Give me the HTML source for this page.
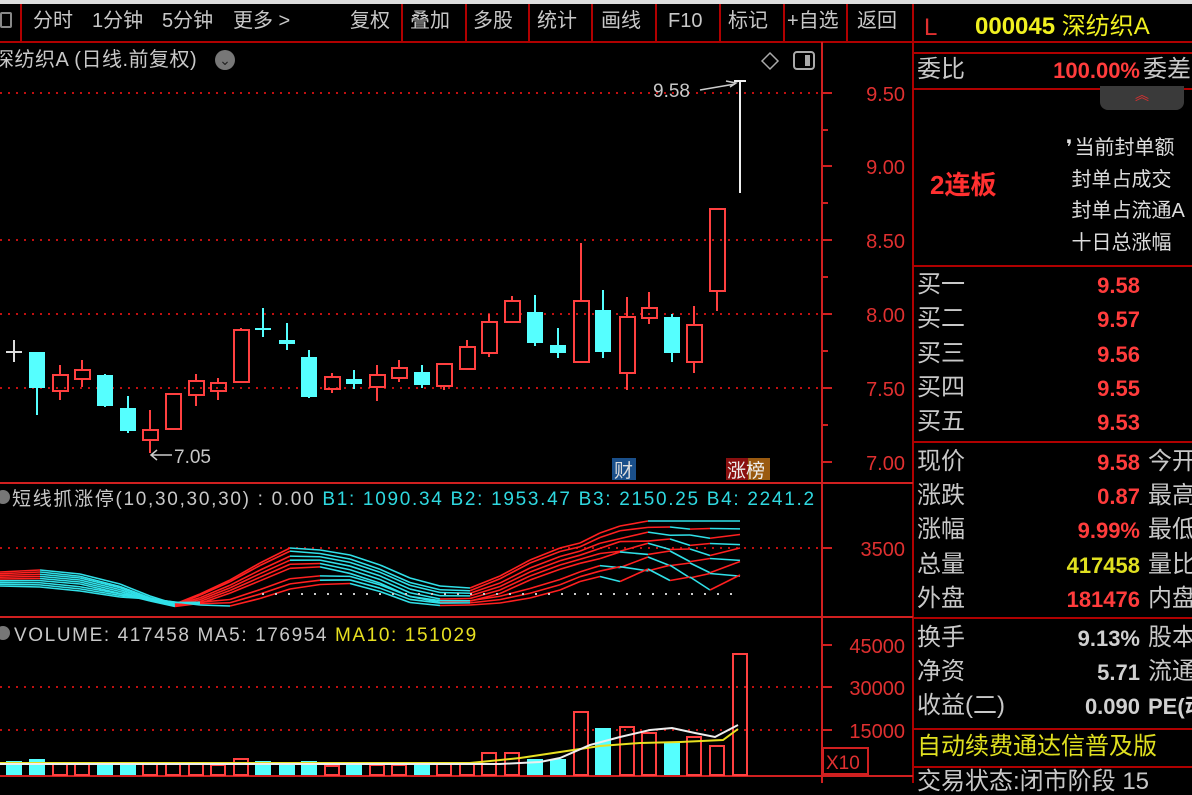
<!DOCTYPE html>
<html><head><meta charset="utf-8">
<style>
*{margin:0;padding:0;box-sizing:border-box}
body{width:1192px;height:783px;background:#000;overflow:hidden;position:relative;font-family:"Liberation Sans","Noto Sans CJK SC",sans-serif;color:#c8c8c8}
.a{position:absolute;white-space:nowrap;line-height:1}
.tb{font-size:20px;color:#c8c8c8;top:11px}
.lab{font-size:24px;color:#c8c8c8;left:917px}
.val{font-size:22px;font-weight:bold;color:#ff3c3c;text-align:right;width:120px;left:1020px}
.r2{font-size:24px;color:#c8c8c8;left:1148px}
.hl{position:absolute;background:#b00000;height:2px}
.vl{position:absolute;background:#b00000;width:2px}
</style></head><body>
<div class="a" style="left:0;top:0;width:1192px;height:4px;background:#dcdcdc"></div>
<div class="hl" style="left:0;top:41px;width:1192px"></div>
<div class="a" style="left:0;top:12px;width:12px;height:16px;border:2px solid #888;border-radius:2px"></div>
<div class="vl" style="left:20px;top:4px;height:38px"></div>
<div class="a tb" style="left:33px">分时</div>
<div class="a tb" style="left:92px">1分钟</div>
<div class="a tb" style="left:162px">5分钟</div>
<div class="a tb" style="left:233px">更多 &gt;</div>
<div class="a tb" style="left:350px">复权</div>
<div class="vl" style="left:401px;top:4px;height:38px"></div>
<div class="a tb" style="left:410px">叠加</div>
<div class="vl" style="left:465px;top:4px;height:38px"></div>
<div class="a tb" style="left:473px">多股</div>
<div class="vl" style="left:528px;top:4px;height:38px"></div>
<div class="a tb" style="left:537px">统计</div>
<div class="vl" style="left:591px;top:4px;height:38px"></div>
<div class="a tb" style="left:601px">画线</div>
<div class="vl" style="left:655px;top:4px;height:38px"></div>
<div class="a tb" style="left:668px">F10</div>
<div class="vl" style="left:719px;top:4px;height:38px"></div>
<div class="a tb" style="left:728px">标记</div>
<div class="vl" style="left:783px;top:4px;height:38px"></div>
<div class="a tb" style="left:787px">+自选</div>
<div class="vl" style="left:846px;top:4px;height:38px"></div>
<div class="a tb" style="left:857px">返回</div>
<div class="vl" style="left:912px;top:4px;height:779px"></div>

<div class="a" style="left:-6px;top:50px;font-size:20px;color:#c8c8c8;letter-spacing:0.5px">深纺织A (日线.前复权)</div>
<div class="a" style="left:215px;top:50px;width:20px;height:20px;border-radius:50%;background:#777;color:#222;font-size:14px;text-align:center;line-height:20px">⌄</div>

<svg class="a" style="left:0;top:0" width="914" height="783" id="sv">
<g stroke="#c01010" stroke-width="2" stroke-dasharray="2 6">
<line x1="0" y1="93" x2="820" y2="93"/><line x1="0" y1="240" x2="820" y2="240"/><line x1="0" y1="314" x2="820" y2="314"/><line x1="0" y1="388" x2="820" y2="388"/>
<line x1="0" y1="548" x2="820" y2="548"/><line x1="0" y1="687" x2="820" y2="687"/><line x1="0" y1="730" x2="820" y2="730"/>
</g>
<g fill="#d02020">
<rect x="821" y="42" width="2" height="741"/>
<rect x="0" y="482" width="913" height="2"/><rect x="0" y="616" width="913" height="2"/><rect x="0" y="775" width="913" height="2"/>
</g>
<g stroke="#d02020" stroke-width="2">
<line x1="822" y1="93" x2="832" y2="93"/><line x1="822" y1="166" x2="832" y2="166"/><line x1="822" y1="240" x2="832" y2="240"/><line x1="822" y1="314" x2="832" y2="314"/><line x1="822" y1="388" x2="832" y2="388"/><line x1="822" y1="462" x2="832" y2="462"/>
<line x1="822" y1="130" x2="828" y2="130"/><line x1="822" y1="203" x2="828" y2="203"/><line x1="822" y1="277" x2="828" y2="277"/><line x1="822" y1="351" x2="828" y2="351"/><line x1="822" y1="425" x2="828" y2="425"/>
<line x1="822" y1="548" x2="832" y2="548"/><line x1="822" y1="645" x2="832" y2="645"/><line x1="822" y1="687" x2="832" y2="687"/><line x1="822" y1="730" x2="832" y2="730"/>
</g>
<g font-family="Liberation Sans,sans-serif" font-size="20" fill="#e03030" text-anchor="end">
<text x="905" y="101">9.50</text><text x="905" y="174">9.00</text><text x="905" y="248">8.50</text><text x="905" y="322">8.00</text><text x="905" y="396">7.50</text><text x="905" y="470">7.00</text>
<text x="905" y="556">3500</text><text x="905" y="653">45000</text><text x="905" y="695">30000</text><text x="905" y="738">15000</text>
</g>
<rect x="823" y="748" width="45" height="26" fill="none" stroke="#d02020" stroke-width="2"/>
<text x="826" y="769" font-family="Liberation Sans,sans-serif" font-size="19" fill="#e03030">X10</text>
<path d="M770 53 L778 61 L770 69 L762 61 Z" fill="none" stroke="#aaa" stroke-width="1.5"/>
<rect x="794" y="52" width="20" height="17" rx="3" fill="none" stroke="#aaa" stroke-width="2"/><rect x="805" y="55" width="5" height="11" fill="#aaa"/>
<g id="cd"></g>
<g id="ind"></g>
<g id="vol"></g>
<g font-family="Liberation Sans,sans-serif" font-size="19" fill="#c8c8c8">
<text x="653" y="97">9.58</text><text x="174" y="463">7.05</text>
</g>
<path d="M700 90 L735 84 M726 81 L736 83 L730 87" stroke="#ccc" stroke-width="1.5" fill="none"/>
<path d="M152 455 L172 455 M157 450 L151 455 L157 460" stroke="#ccc" stroke-width="1.5" fill="none"/>
<rect x="612" y="458" width="24" height="22" fill="#1a4f8a"/><text x="614" y="477" font-size="19" fill="#ddd" font-family="Noto Sans CJK SC,sans-serif">财</text>
<rect x="726" y="458" width="22" height="22" fill="#8a0f0f"/><rect x="748" y="458" width="22" height="22" fill="#9a5a10"/>
<text x="727" y="477" font-size="19" fill="#eee" font-family="Noto Sans CJK SC,sans-serif">涨榜</text>
<circle cx="3" cy="497" r="7" fill="#777"/>
<text x="12" y="505" font-size="19" fill="#c8c8c8" letter-spacing="1.7" font-family="Liberation Sans,Noto Sans CJK SC,sans-serif">短线抓涨停(10,30,30,30) : 0.00 <tspan fill="#2fd8e0">B1: 1090.34  B2: 1953.47  B3: 2150.25  B4: 2241.2</tspan></text>
<circle cx="3" cy="633" r="7" fill="#777"/>
<text x="14" y="641" font-size="19" fill="#c8c8c8" letter-spacing="1.6" font-family="Liberation Sans,sans-serif">VOLUME: 417458  MA5: 176954  <tspan fill="#e8e020">MA10: 151029</tspan></text>
</svg>

<div class="hl" style="left:914px;top:52px;width:278px"></div>
<div class="hl" style="left:914px;top:88px;width:278px"></div>
<div class="hl" style="left:914px;top:265px;width:278px"></div>
<div class="hl" style="left:914px;top:441px;width:278px"></div>
<div class="hl" style="left:914px;top:617px;width:278px"></div>
<div class="hl" style="left:914px;top:728px;width:278px"></div>
<div class="hl" style="left:914px;top:766px;width:278px"></div>
<div class="a" style="left:924px;top:16px;font-size:24px;color:#e03030">L</div>
<div class="a" style="left:975px;top:15px;font-size:24px;color:#f0f020;font-weight:bold">000045 <span style="font-weight:normal">深纺织A</span></div>
<div class="a lab" style="top:58px">委比</div>
<div class="a val" style="top:60px;left:1020px">100.00%</div>
<div class="a r2" style="top:58px;left:1143px">委差</div>
<div class="a" style="left:1100px;top:86px;width:84px;height:24px;background:#3a3a3a;border-radius:0 0 8px 8px;color:#e03030;font-size:14px;text-align:center;line-height:18px">︽</div>
<div class="a" style="left:930px;top:172px;font-size:26px;color:#ff3030;font-weight:bold">2连板</div>
<div class="a" style="left:1066px;top:133px;font-size:20px;color:#ddd;line-height:31.5px">❜<span style="position:relative;left:2px">当前封单额</span><br>&nbsp;封单占成交<br>&nbsp;封单占流通A<br>&nbsp;十日总涨幅</div>
<div class="a lab" style="top:273px">买一</div><div class="a val" style="top:275px">9.58</div>
<div class="a lab" style="top:307px">买二</div><div class="a val" style="top:309px">9.57</div>
<div class="a lab" style="top:342px">买三</div><div class="a val" style="top:344px">9.56</div>
<div class="a lab" style="top:376px">买四</div><div class="a val" style="top:378px">9.55</div>
<div class="a lab" style="top:410px">买五</div><div class="a val" style="top:412px">9.53</div>
<div class="a lab" style="top:450px">现价</div><div class="a val" style="top:452px">9.58</div><div class="a r2" style="top:450px">今开</div>
<div class="a lab" style="top:484px">涨跌</div><div class="a val" style="top:486px">0.87</div><div class="a r2" style="top:484px">最高</div>
<div class="a lab" style="top:518px">涨幅</div><div class="a val" style="top:520px">9.99%</div><div class="a r2" style="top:518px">最低</div>
<div class="a lab" style="top:553px">总量</div><div class="a val" style="top:555px;color:#e0e020">417458</div><div class="a r2" style="top:553px">量比</div>
<div class="a lab" style="top:587px">外盘</div><div class="a val" style="top:589px">181476</div><div class="a r2" style="top:587px">内盘</div>
<div class="a lab" style="top:626px">换手</div><div class="a val" style="top:628px;color:#d0d0d0">9.13%</div><div class="a r2" style="top:626px">股本</div>
<div class="a lab" style="top:660px">净资</div><div class="a val" style="top:662px;color:#d0d0d0">5.71</div><div class="a r2" style="top:660px">流通</div>
<div class="a lab" style="top:694px">收益(二)</div><div class="a val" style="top:696px;color:#d0d0d0">0.090</div><div class="a r2" style="top:696px;font-size:22px;font-weight:bold;color:#d0d0d0">PE(动</div>
<div class="a" style="left:917px;top:735px;font-size:24px;color:#e0e020">自动续费通达信普及版</div>
<div class="a" style="left:917px;top:770px;font-size:24px;color:#c8c8c8">交易状态:闭市阶段 15</div>

<script>
var NS="http://www.w3.org/2000/svg";
function el(p,t,a){var e=document.createElementNS(NS,t);for(var k in a)e.setAttribute(k,a[k]);p.appendChild(e);return e;}
var X=[14,37,60,82,105,128,150,173,196,218,241,263,287,309,332,354,377,399,422,444,467,489,512,535,558,581,603,627,649,672,694,717,740];
var D=[[352,352,340,362,'x'],[352,388,352,415,'c'],[375,391,365,400,'r'],[370,379,360,387,'r'],[375,406,374,407,'c'],[408,431,396,433,'c'],[430,440,410,453,'r'],[394,429,394,429,'r'],[381,395,374,406,'r'],[383,391,378,400,'r'],[330,382,328,382,'r'],[329,329,308,337,'y'],[340,344,323,350,'c'],[357,397,350,398,'c'],[377,389,373,393,'r'],[379,384,370,389,'c'],[375,387,365,401,'r'],[368,378,360,382,'r'],[372,385,365,388,'c'],[364,386,363,390,'r'],[347,369,340,370,'r'],[322,353,314,357,'r'],[301,322,296,323,'r'],[312,343,295,346,'c'],[345,353,328,358,'c'],[301,362,243,362,'r'],[310,352,290,358,'c'],[317,373,297,390,'r'],[308,318,292,324,'r'],[317,353,314,362,'c'],[325,362,306,373,'r'],[209,291,209,311,'r'],[81,81,81,193,'w']];
var cd=document.getElementById('cd'),R='#ff4040',C='#55ffff';
D.forEach(function(d,i){var x=X[i];
 if(d[4]=='w'){el(cd,'line',{x1:x,y1:81,x2:x,y2:193,stroke:'#eee','stroke-width':2});el(cd,'line',{x1:x-6,y1:81,x2:x+6,y2:81,stroke:'#eee','stroke-width':2});return;}
 if(d[4]=='x'||d[4]=='y'){var col=d[4]=='x'?'#ddd':C;el(cd,'line',{x1:x,y1:d[2],x2:x,y2:d[3],stroke:col,'stroke-width':2});el(cd,'line',{x1:x-8,y1:d[0],x2:x+8,y2:d[0],stroke:col,'stroke-width':2});return;}
 if(d[4]=='r'){el(cd,'line',{x1:x,y1:d[2],x2:x,y2:d[0],stroke:R,'stroke-width':2});el(cd,'line',{x1:x,y1:d[1],x2:x,y2:d[3],stroke:R,'stroke-width':2});el(cd,'rect',{x:x-7,y:d[0],width:15,height:Math.max(d[1]-d[0],2),fill:'none',stroke:R,'stroke-width':2});}
 else{el(cd,'line',{x1:x,y1:d[2],x2:x,y2:d[3],stroke:C,'stroke-width':2});el(cd,'rect',{x:x-8,y:d[0],width:16,height:Math.max(d[1]-d[0],3),fill:C});}
});
var ind=document.getElementById('ind');
var XS=[0,40,80,120,150,175,200,230,260,290,320,350,380,410,440,470,500,530,560,580,600,620,648,670,690,710,740];
var F=[572,570,574,584,596,604,594,580,563,548,550,555,565,578,586,588,576,560,548,543,533,526,521,521,521,521,521];
var SP=[14,16,18,20,14,8,10,14,20,25,28,32,34,36,30,22,22,24,28,30,36,42,46,52,60,64,58];
for(var k=0;k<9;k++){var t=k/8,pts=[];
 for(var i=0;i<XS.length;i++){var lag=Math.round(t*2);var j=Math.max(0,i-lag);var f=(F[i]*(1-t*0.5)+F[j]*t*0.5);
  var y=f+SP[i]*t;
  if(i>=21){y+=((k+i)%2?5:-4)*t;}
  pts.push([XS[i],Math.max(521,Math.min(612,y))]);}
 for(var q=1;q<pts.length;q++){var a=pts[q-1],b=pts[q];el(ind,'line',{x1:a[0],y1:a[1],x2:b[0],y2:b[1],stroke:b[1]<a[1]-0.3?'#ff2020':'#30e0e8','stroke-width':1.6});}
}
for(var x=262;x<=742;x+=13)el(ind,'rect',{x:x,y:593,width:2,height:2,fill:'#ccc'});
var vol=document.getElementById('vol');
var VT=[761,759,763,763,763,763,763,763,763,765,759,761,763,761,766,763,765,765,765,763,763,753,753,759,759,712,728,727,733,743,737,746,654];
VT.forEach(function(t,i){var x=X[i],ty=D[i][4];var cy=(ty=='c'||ty=='y'||ty=='x');
 if(cy)el(vol,'rect',{x:x-8,y:t,width:16,height:775-t,fill:C});else el(vol,'rect',{x:x-7,y:t,width:14,height:775-t,fill:'none',stroke:R,'stroke-width':2});});
el(vol,'polyline',{points:'0,763 470,763 520,758 560,752 600,746 640,743 680,742 723,740 738,729',fill:'none',stroke:'#e8e020','stroke-width':2});
el(vol,'polyline',{points:'0,764 500,764 540,762 560,758 590,745 620,737 650,730 672,728 695,733 715,737 738,725',fill:'none',stroke:'#eee','stroke-width':2});
</script>
</body></html>
